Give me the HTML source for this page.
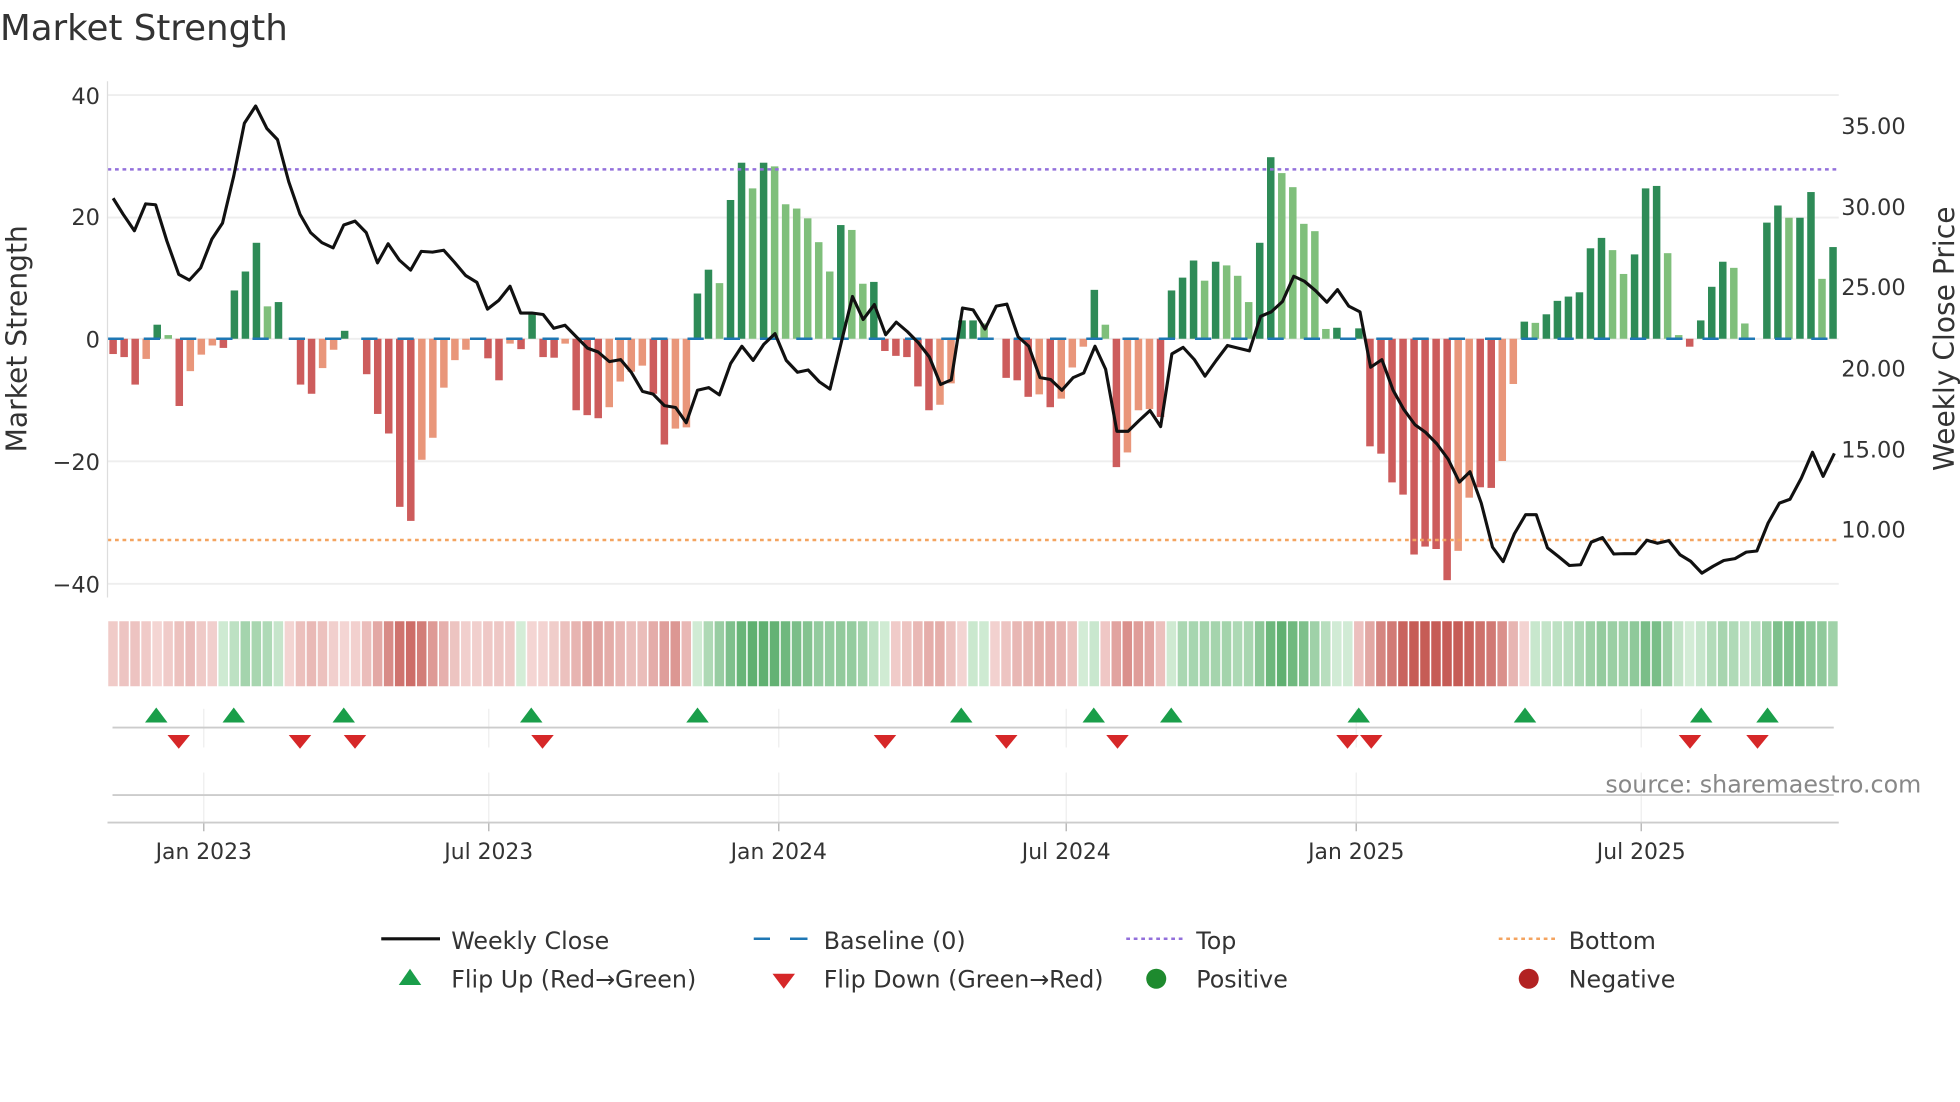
<!DOCTYPE html>
<html><head><meta charset="utf-8"><style>
html,body{margin:0;padding:0;background:#fff;}
svg{display:block;font-family:"DejaVu Sans","Liberation Sans",sans-serif;}
</style></head><body>
<svg id="c" width="1960" height="1102" viewBox="0 0 1568 881.6" xmlns="http://www.w3.org/2000/svg">
<rect width="1568" height="881.6" fill="#fff"/>
<text x="0" y="32" font-size="28.5" fill="#333">Market Strength</text>
<g id="grid"></g>
<g id="heat"></g>
<g id="bars"></g>
<line x1="86" y1="271" x2="1471" y2="271" stroke="#1f77b4" stroke-width="2" stroke-dasharray="13,16"/>
<line x1="86" y1="135.5" x2="1471" y2="135.5" stroke="#9370db" stroke-width="2" stroke-dasharray="3,3"/>
<line x1="86" y1="432" x2="1471" y2="432" stroke="#f4a460" stroke-width="2" stroke-dasharray="3,3"/>
<polyline id="price" fill="none" stroke="#111" stroke-width="2.5" stroke-linejoin="round"/>
<line x1="86" y1="65" x2="86" y2="478" stroke="#ddd" stroke-width="1"/>
<g font-size="18" fill="#333" text-anchor="end">
<text x="80" y="83">40</text><text x="80" y="180">20</text><text x="80" y="278">0</text><text x="80" y="376">−20</text><text x="80" y="474">−40</text>
</g>
<g font-size="18" fill="#333">
<text x="1473" y="107">35.00</text><text x="1473" y="172">30.00</text><text x="1473" y="236">25.00</text><text x="1473" y="301">20.00</text><text x="1473" y="366">15.00</text><text x="1473" y="430">10.00</text>
</g>
<text transform="translate(21,271) rotate(-90)" font-size="22.5" fill="#333" text-anchor="middle">Market Strength</text>
<text transform="translate(1563,271) rotate(-90)" font-size="22.5" fill="#333" text-anchor="middle">Weekly Close Price</text>
<line x1="90" y1="582" x2="1467" y2="582" stroke="#ccc" stroke-width="1.5"/>
<line x1="90" y1="636" x2="1467" y2="636" stroke="#ccc" stroke-width="1.5"/>
<line x1="86" y1="658" x2="1471" y2="658" stroke="#ccc" stroke-width="1.5"/>
<g id="flips"></g>
<text x="1537" y="634" font-size="19" fill="#888" text-anchor="end">source: sharemaestro.com</text>
<g font-size="17.5" fill="#333" text-anchor="middle">
<text x="163" y="687">Jan 2023</text><text x="391" y="687">Jul 2023</text><text x="623" y="687">Jan 2024</text><text x="853" y="687">Jul 2024</text><text x="1085" y="687">Jan 2025</text><text x="1313" y="687">Jul 2025</text>
</g>
<g font-size="19" fill="#333">
<line x1="305" y1="751" x2="352" y2="751" stroke="#111" stroke-width="2.5"/>
<text x="361" y="759">Weekly Close</text>
<line x1="603" y1="751" x2="648" y2="751" stroke="#1f77b4" stroke-width="2" stroke-dasharray="13,16"/>
<line x1="632" y1="751" x2="646" y2="751" stroke="#1f77b4" stroke-width="2"/>
<text x="659" y="759">Baseline (0)</text>
<line x1="901" y1="751" x2="946" y2="751" stroke="#9370db" stroke-width="2" stroke-dasharray="3,3"/>
<text x="957" y="759">Top</text>
<line x1="1199" y1="751" x2="1244" y2="751" stroke="#f4a460" stroke-width="2" stroke-dasharray="3,3"/>
<text x="1255" y="759">Bottom</text>
<polygon points="319,788 337,788 328,775" fill="#1a9e4a"/>
<text x="361" y="790">Flip Up (Red→Green)</text>
<polygon points="618,779 636,779 627,791" fill="#d62728"/>
<text x="659" y="790">Flip Down (Green→Red)</text>
<circle cx="925" cy="783" r="8" fill="#1e8a2e"/>
<text x="957" y="790">Positive</text>
<circle cx="1223" cy="783" r="8" fill="#b22222"/>
<text x="1255" y="790">Negative</text>
</g>
</svg>
<script>
var NS="http://www.w3.org/2000/svg";
function el(p,t,a){var e=document.createElementNS(NS,t);for(var k in a)e.setAttribute(k,a[k]);p.appendChild(e);return e;}
var bs="-2.5R -3R -7.5R -3.3S 2.3D 0.6L -11R -5.3S -2.6S -1.1S -1.5R 7.9D 11D 15.7D 5.3L 6D 0 -7.5R -9R -4.8S -1.8S 1.3D 0 -5.8R -12.3R -15.5R -27.5R -29.8R -19.8S -16.2S -8S -3.5S -1.8S 0 -3.2R -6.8R -0.8S -1.7R 4D -3R -3.1R -0.8S -11.7R -12.5R -13R -11.2S -7S -5.4S -4.4S -9R -17.3R -14.7S -14.5S 7.4D 11.3D 9.1L 22.7D 28.8D 24.6L 28.8D 28.2L 22L 21.3L 19.7L 15.8L 11L 18.6D 17.8L 9L 9.3D -2R -2.8R -3R -7.8R -11.7R -10.8S -7.3S 3D 3D 2.5L 0 -6.4R -6.8R -9.5R -9.1S -11.2R -9.8S -4.7S -1.3S 8D 2.3L -21R -18.6S -11.7S -11.5S -12.8R 7.9D 10D 12.8D 9.5L 12.6D 12L 10.3L 6L 15.7D 29.7D 27.1L 24.8L 18.8L 17.6L 1.6L 1.8D 0 1.7D -17.6R -18.8R -23.5R -25.5R -35.3R -34R -34.4R -39.5R -34.7S -26S -24.3R -24.4R -20S -7.4S 2.8D 2.6L 4D 6.2D 6.9D 7.6D 14.8D 16.5D 14.5L 10.6L 13.8D 24.6D 25D 14L 0.6L -1.3R 3D 8.5D 12.6D 11.6L 2.5L 0 19D 21.8D 19.8L 19.8D 24D 9.8L 15D".split(" ");
var col={D:"#2e8b57",L:"#7fbf7b",R:"#cd5c5c",S:"#e9967a"};
var bars=document.getElementById("bars"),heat=document.getElementById("heat"),grid=document.getElementById("grid");
[76,174,271,369,467].forEach(function(y){el(grid,"line",{x1:86,y1:y,x2:1471,y2:y,stroke:"#eee","stroke-width":1.5});});
[163,391,623,853,1085,1313].forEach(function(x){
el(grid,"line",{x1:x,y1:567,x2:x,y2:598,stroke:"#eee","stroke-width":1});
el(grid,"line",{x1:x,y1:618,x2:x,y2:658,stroke:"#eee","stroke-width":1});
el(grid,"line",{x1:x,y1:658,x2:x,y2:665,stroke:"#bbb","stroke-width":1.2});});
var vals=bs.map(function(s){return parseFloat(s);});
function mix(a,b,t){return "rgb("+[0,1,2].map(function(i){return Math.round(a[i]+(b[i]-a[i])*t);}).join(",")+")";}
for(var i=0;i<bs.length;i++){
var s=bs[i],v=vals[i],c=s.slice(-1),x=90.5+i*8.82;
if(v!==0){var y0=271-v*4.89;el(bars,"rect",{x:x-3,y:Math.min(y0,271),width:6,height:Math.abs(v*4.89),fill:col[c]});}
var a=0,n=0;for(var j=i-1;j<=i+1;j++){if(j>=0&&j<vals.length){a+=vals[j];n++;}}a/=n;
var t=Math.min(Math.abs(a)/30,1);
var f=a>=0?mix([214,238,217],[84,170,102],t):mix([244,214,212],[198,92,86],t);
el(heat,"rect",{x:x-3.9,y:497,width:7.6,height:52,fill:f});
}
var z1=[181,518,197,560,215,603,233,533,249,535,267,630,286,717,303,732,321,700,339,625,356,583,374,460,391,322,409,277,427,336,444,365,462,475,480,560,497,608,515,634,533,648,550,588,568,578,586,608,604,687,621,637,639,680,657,706,674,657,692,659,710,654,727,685,745,720,763,738,780,808,798,785,816,748,833,818,851,818,869,822,886,858,904,850,922,880,940,910,957,920,975,945,993,940,1010,973,1028,1023,1045,1030,1063,1060,1081,1065,1098,1105,1116,1020,1134,1013,1151,1032,1169,950,1187,905,1205,942,1222,900,1240,872,1258,942,1276,973,1293,967,1311,998,1328,1017,1346,895,1364,775,1381,835,1399,796,1417,875,1434,842,1452,867,1469,895,1487,933,1505,1005,1522,993,1540,805,1557,810];
var z2=[8,860,26,800,43,795,61,880,78,905,96,987,113,992,131,1020,149,987,166,975,184,905,201,965,219,1127,237,1127,254,1100,272,1073,289,1115,307,925,325,908,343,940,360,983,378,942,396,903,413,910,431,917,449,827,466,815,484,788,502,722,519,735,537,760,555,790,572,757,590,800,608,815,625,960,643,940,661,1020,678,1070,696,1110,713,1130,731,1160,749,1200,767,1260,784,1233,802,1315,820,1430,837,1468,855,1395,873,1345,890,1345,908,1432,926,1455,943,1478,961,1476,978,1417,996,1405,1014,1448,1031,1447,1049,1447,1067,1412,1084,1420,1102,1413,1120,1450,1137,1467,1155,1498,1173,1480,1190,1465,1208,1460,1226,1443,1243,1440,1261,1367,1279,1315,1296,1305,1314,1250,1332,1182,1349,1245,1367,1185];
var pts=[];
for(var k=0;k<z1.length;k+=2)pts.push((z1[k]/2).toFixed(1)+","+(z1[k+1]/3.267).toFixed(1));
for(var k=0;k<z2.length;k+=2)pts.push((784+z2[k]/2).toFixed(1)+","+(z2[k+1]/3.267).toFixed(1));
document.getElementById("price").setAttribute("points",pts.join(" "));
var fl=document.getElementById("flips");
[125,187,275,425,558,769,875,937,1087,1220,1361,1414].forEach(function(x){el(fl,"polygon",{points:(x-9)+",578 "+(x+9)+",578 "+x+",566",fill:"#1a9e4a"});});
[143,240,284,434,708,805,894,1078,1097,1352,1406].forEach(function(x){el(fl,"polygon",{points:(x-9)+",588 "+(x+9)+",588 "+x+",599",fill:"#d62728"});});
</script>
</body></html>
